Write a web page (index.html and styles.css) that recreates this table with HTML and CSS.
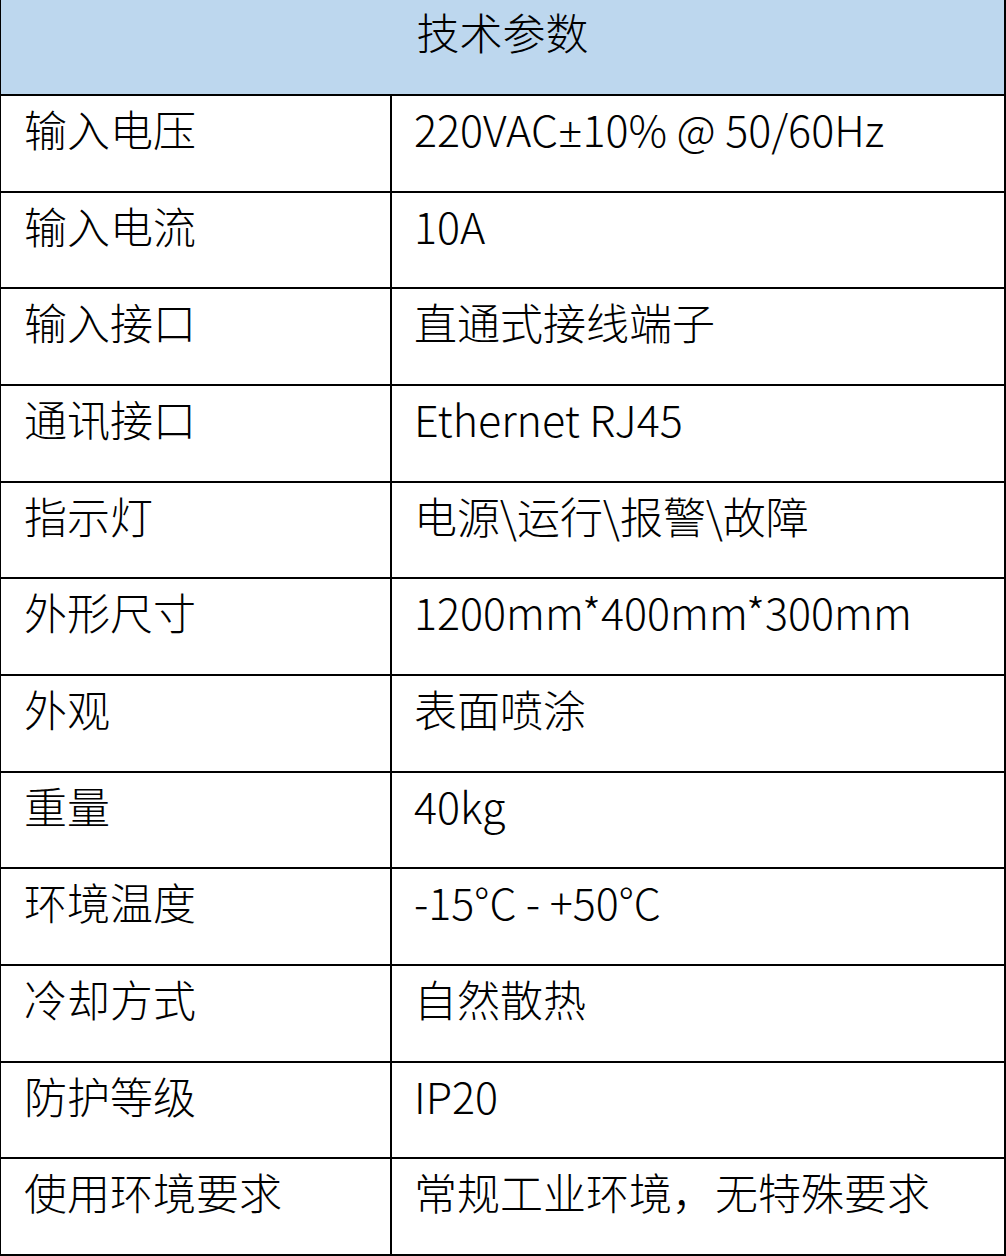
FILE: index.html
```html
<!DOCTYPE html>
<html lang="zh-CN">
<head>
<meta charset="utf-8">
<title>技术参数</title>
<link rel="stylesheet" href="styles.css">
</head>
<body>
<div class="sheet">
  <div class="head">技术参数</div>
  <div class="row"><div class="k">输入电压</div><div class="v">220VAC<span class="pm">±</span>10% @ 50/60Hz</div></div>
  <div class="row"><div class="k">输入电流</div><div class="v">10A</div></div>
  <div class="row"><div class="k">输入接口</div><div class="v">直通式接线端子</div></div>
  <div class="row"><div class="k">通讯接口</div><div class="v">Ethernet RJ45</div></div>
  <div class="row"><div class="k">指示灯</div><div class="v">电源\运行\报警\故障</div></div>
  <div class="row"><div class="k">外形尺寸</div><div class="v">1200mm*400mm*300mm</div></div>
  <div class="row"><div class="k">外观</div><div class="v">表面喷涂</div></div>
  <div class="row"><div class="k">重量</div><div class="v">40kg</div></div>
  <div class="row"><div class="k">环境温度</div><div class="v">-15°C - +50°C</div></div>
  <div class="row"><div class="k">冷却方式</div><div class="v">自然散热</div></div>
  <div class="row"><div class="k">防护等级</div><div class="v">IP20</div></div>
  <div class="row"><div class="k">使用环境要求</div><div class="v">常规工业环境，无特殊要求</div></div>
</div>
</body>
</html>
```
FILE: styles.css
```css
html, body {
  margin: 0;
  padding: 0;
  background: #ffffff;
}
.sheet {
  width: 1006px;
  box-sizing: border-box;
  border-left: 1px solid #000;
  border-right: 2px solid #000;
  font-family: "Noto Sans CJK SC", "Noto Sans", sans-serif;
  font-weight: 300;
  font-size: 43px;
  color: #000;
}
.head {
  height: 94px;
  border-bottom: 2px solid #000;
  background: #bdd7ee;
  text-align: center;
  line-height: 62px;
}
.row {
  display: flex;
  height: 94.67px;
  border-bottom: 2px solid #000;
}
.k {
  width: 391px;
  flex: none;
  border-right: 2px solid #000;
  padding-left: 23px;
  box-sizing: border-box;
  line-height: 64px;
  white-space: nowrap;
}
.v {
  flex: 1;
  padding-left: 22px;
  line-height: 64px;
  white-space: nowrap;
}
.pm {
  font-family: "Noto Sans", "Liberation Sans", sans-serif;
  font-weight: 300;
}
```
